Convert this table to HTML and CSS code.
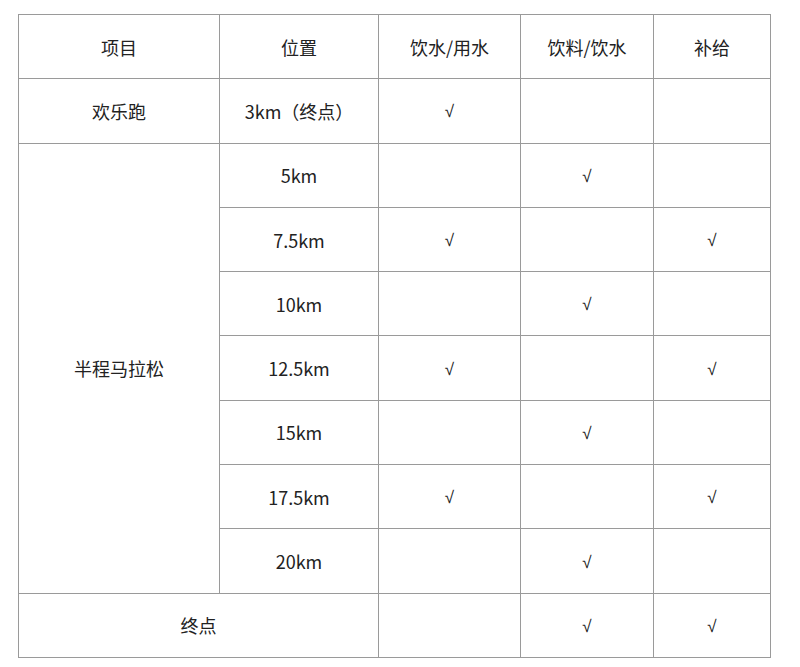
FILE: index.html
```html
<!DOCTYPE html>
<html lang="zh-CN">
<head>
<meta charset="utf-8">
<title>补给站</title>
<link rel="stylesheet" href="styles.css">
</head>
<body>
<table class="grid">
  <colgroup>
    <col class="c1"><col class="c2"><col class="c3"><col class="c4"><col class="c5">
  </colgroup>
  <tr><td>项目</td><td>位置</td><td>饮水/用水</td><td>饮料/饮水</td><td>补给</td></tr>
  <tr><td>欢乐跑</td><td>3km（终点）</td><td><span class="ok">√</span></td><td></td><td></td></tr>
  <tr><td rowspan="7">半程马拉松</td><td>5km</td><td></td><td><span class="ok">√</span></td><td></td></tr>
  <tr><td>7.5km</td><td><span class="ok">√</span></td><td></td><td><span class="ok">√</span></td></tr>
  <tr><td>10km</td><td></td><td><span class="ok">√</span></td><td></td></tr>
  <tr><td>12.5km</td><td><span class="ok">√</span></td><td></td><td><span class="ok">√</span></td></tr>
  <tr><td>15km</td><td></td><td><span class="ok">√</span></td><td></td></tr>
  <tr><td>17.5km</td><td><span class="ok">√</span></td><td></td><td><span class="ok">√</span></td></tr>
  <tr><td>20km</td><td></td><td><span class="ok">√</span></td><td></td></tr>
  <tr><td colspan="2">终点</td><td></td><td><span class="ok">√</span></td><td><span class="ok">√</span></td></tr>
</table>
</body>
</html>
```

FILE: styles.css
```css
html, body {
  margin: 0;
  padding: 0;
  background: #fff;
}
body {
  font-family: "Noto Sans CJK SC", "Noto Sans", sans-serif;
  font-size: 18px;
  color: #222;
}
.grid {
  border-collapse: collapse;
  margin: 14px 0 0 18px;
  table-layout: fixed;
  width: 752px;
}
.c1 { width: 201px; }
.c2 { width: 159px; }
.c3 { width: 142px; }
.c4 { width: 133px; }
.c5 { width: 117px; }
.grid td {
  border: 1px solid #9a9a9a;
  height: 63.3px;
  padding: 0;
  text-align: center;
  vertical-align: middle;
  line-height: 22px;
}
.ok {
  font-family: "Liberation Sans", "DejaVu Sans", sans-serif;
  font-size: 17px;
}
```
